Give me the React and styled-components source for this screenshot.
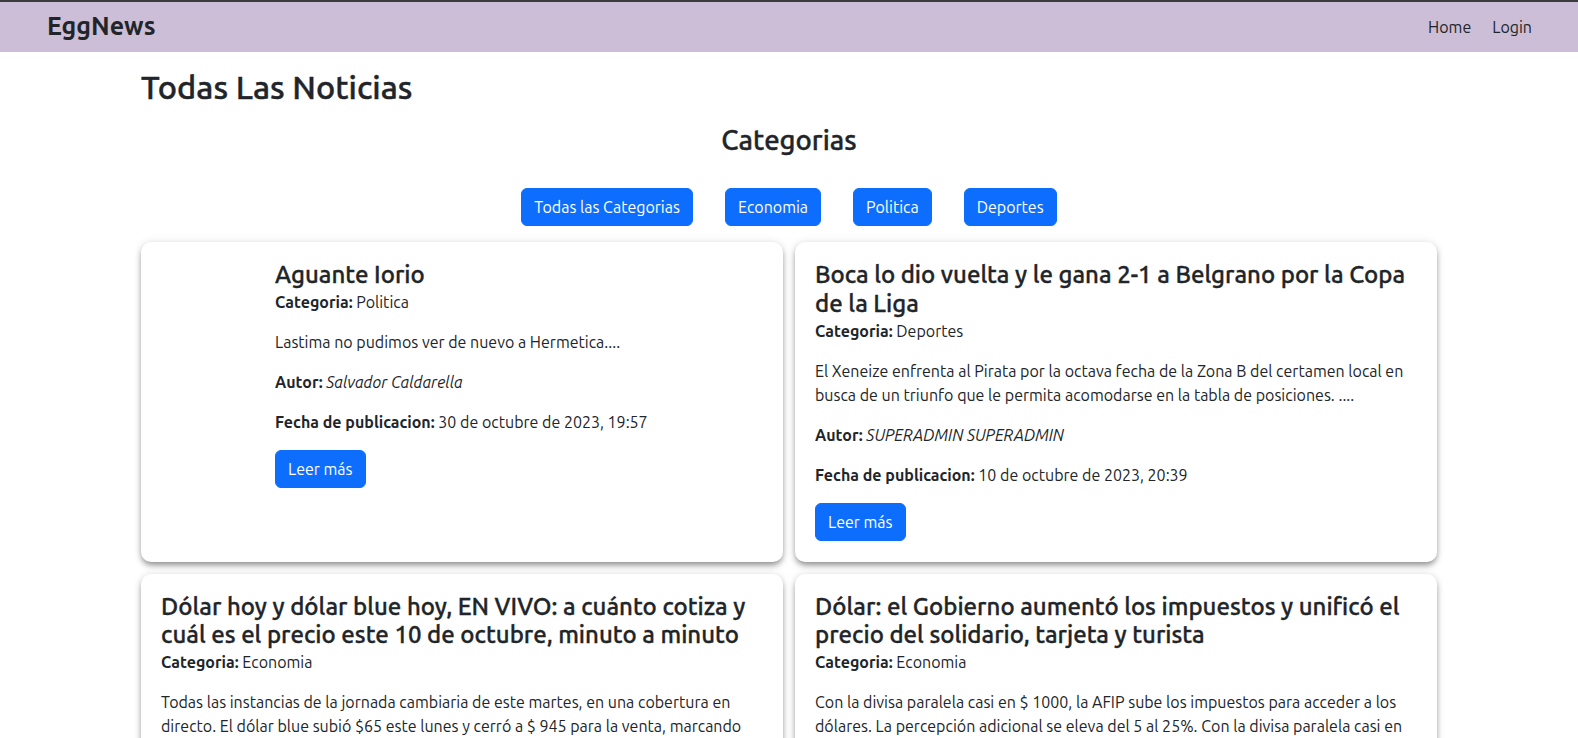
import React from "react";
import styled, { createGlobalStyle } from "styled-components";

const GlobalStyle = createGlobalStyle`
  * {
    box-sizing: border-box;
  }
  body {
    margin: 0;
    background: #fff;
    color: #212529;
    font-family: Ubuntu, Lato, "Noto Sans", sans-serif;
    font-size: 16px;
    line-height: 1.5;
  }
`;

const news = [
  {
    id: 1,
    title: "Aguante Iorio",
    category: "Politica",
    body: "Lastima no pudimos ver de nuevo a Hermetica....",
    author: "Salvador Caldarella",
    date: "30 de octubre de 2023, 19:57",
    withImage: true,
  },
  {
    id: 2,
    title: "Boca lo dio vuelta y le gana 2-1 a Belgrano por la Copa de la Liga",
    category: "Deportes",
    body:
      "El Xeneize enfrenta al Pirata por la octava fecha de la Zona B del certamen local en busca de un triunfo que le permita acomodarse en la tabla de posiciones. ....",
    author: "SUPERADMIN SUPERADMIN",
    date: "10 de octubre de 2023, 20:39",
  },
  {
    id: 3,
    title:
      "Dólar hoy y dólar blue hoy, EN VIVO: a cuánto cotiza y cuál es el precio este 10 de octubre, minuto a minuto",
    category: "Economia",
    body:
      "Todas las instancias de la jornada cambiaria de este martes, en una cobertura en directo. El dólar blue subió $65 este lunes y cerró a $ 945 para la venta, marcando un nuevo récord nominal. ....",
    author: "SUPERADMIN SUPERADMIN",
    date: "10 de octubre de 2023, 12:10",
  },
  {
    id: 4,
    title:
      "Dólar: el Gobierno aumentó los impuestos y unificó el precio del solidario, tarjeta y turista",
    category: "Economia",
    body:
      "Con la divisa paralela casi en $ 1000, la AFIP sube los impuestos para acceder a los dólares. La percepción adicional se eleva del 5 al 25%. Con la divisa paralela casi en $\u00a01000. ....",
    author: "SUPERADMIN SUPERADMIN",
    date: "10 de octubre de 2023, 12:05",
  },
];

const categories = ["Todas las Categorias", "Economia", "Politica", "Deportes"];

const Navbar = styled.nav`
  height: 52px;
  border-top: 2px solid #3b3b3b;
  background: #cbbed6;
  display: flex;
  align-items: center;
  justify-content: space-between;
  padding: 0 46px 0 47px;
`;

const Brand = styled.a`
  font-size: 25px;
  font-weight: 700;
  color: #212529;
  text-decoration: none;
`;

const NavLinks = styled.div`
  display: flex;
  gap: 21px;
  a {
    color: #212529;
    text-decoration: none;
    font-size: 16px;
  }
`;

const Container = styled.main`
  width: 1296px;
  margin: 0 auto;
  padding-bottom: 40px;
`;

const PageTitle = styled.h2`
  margin: 16px 0 0;
  font-size: 32.5px;
  font-weight: 500;
  line-height: 1.2;
  -webkit-text-stroke: 0.45px #212529;
`;

const SectionTitle = styled.h3`
  margin: 16px 0 0;
  text-align: center;
  font-size: 27.5px;
  font-weight: 500;
  line-height: 1.2;
  -webkit-text-stroke: 0.4px #212529;
`;

const CategoryBar = styled.div`
  display: flex;
  justify-content: center;
  gap: 32px;
  margin: 32px 0 16px;
`;

const Button = styled.a`
  display: inline-block;
  background: #0d6efd;
  border: 1px solid #0d6efd;
  color: #fff;
  border-radius: 6px;
  padding: 6px 12px;
  font-size: 16px;
  line-height: 24px;
  text-decoration: none;
  cursor: pointer;
`;

const Grid = styled.div`
  display: grid;
  grid-template-columns: 1fr 1fr;
  gap: 12px;
`;

const Card = styled.article`
  background: #fff;
  border-radius: 10px;
  box-shadow: 0 4px 6px -1px rgba(0, 0, 0, 0.42), 0 0 8px rgba(0, 0, 0, 0.1);
  padding: 19px 20px 21px;
  display: flex;
`;

const ImageSlot = styled.div`
  flex: 0 0 114px;
`;

const CardBody = styled.div`
  flex: 1;
  min-width: 0;
`;

const CardTitle = styled.h4`
  margin: 0;
  font-size: 24px;
  font-weight: 500;
  line-height: 1.2;
  -webkit-text-stroke: 0.35px #212529;
`;

const Line = styled.p`
  margin: 0 0 16px;
  em {
    font-style: italic;
  }
`;

function NewsCard({ item }) {
  return (
    <Card>
      {item.withImage && <ImageSlot />}
      <CardBody>
        <CardTitle>{item.title}</CardTitle>
        <Line>
          <b>Categoria:</b> {item.category}
        </Line>
        <Line>{item.body}</Line>
        <Line>
          <b>Autor:</b> <em>{item.author}</em>
        </Line>
        <Line>
          <b>Fecha de publicacion:</b> {item.date}
        </Line>
        <Button>Leer más</Button>
      </CardBody>
    </Card>
  );
}

export default function App() {
  return (
    <>
      <GlobalStyle />
      <Navbar>
        <Brand>EggNews</Brand>
        <NavLinks>
          <a>Home</a>
          <a>Login</a>
        </NavLinks>
      </Navbar>
      <Container>
        <PageTitle>Todas Las Noticias</PageTitle>
        <SectionTitle>Categorias</SectionTitle>
        <CategoryBar>
          {categories.map((c) => (
            <Button key={c}>{c}</Button>
          ))}
        </CategoryBar>
        <Grid>
          {news.map((item) => (
            <NewsCard key={item.id} item={item} />
          ))}
        </Grid>
      </Container>
    </>
  );
}
